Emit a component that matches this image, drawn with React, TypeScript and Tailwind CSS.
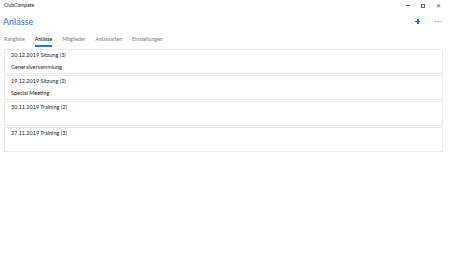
import {MoreHorizontal} from "lucide-react";

const tabs = ["Rangliste", "Anlässe", "Mitglieder", "Anlassarten", "Einstellungen"];

const events = [
    {title: "20.12.2019 Sitzung (3)", note: "Generalversammlung"},
    {title: "19.12.2019 Sitzung (2)", note: "Special Meeting"},
    {title: "30.11.2019 Training (2)", note: ""},
    {title: "27.11.2019 Training (3)", note: ""},
];

const App = () => {
    return (
        <div className="flex flex-col w-[450px] h-[253px] bg-white text-[#222] font-['Lato',sans-serif]">
            {/* title bar */}
            <div className="flex items-center justify-between h-[11px] pl-[4px]">
                <span className="text-[5px] leading-none">ClubCompete</span>
                <div className="flex items-center gap-[11px] pr-[9px] text-[#555]">
                    <div className="w-[4px] h-px bg-[#666]"/>
                    <div className="w-[4px] h-[4px] border border-[#666]"/>
                    <span className="text-[6px] leading-none">✕</span>
                </div>
            </div>

            {/* header */}
            <div className="flex items-center justify-between h-[20px] pl-[3px] pr-[7px]">
                <h1 className="text-[9px] leading-none text-[#1a73e8] mt-[1px]">Anlässe</h1>
                <div className="flex items-center gap-[14px]">
                    <div className="relative w-[5px] h-[5px]">
                        <div className="absolute left-0 top-[2px] w-[5px] h-[1.5px] bg-[#1a73e8]"/>
                        <div className="absolute top-0 left-[2px] w-[1.5px] h-[5px] bg-[#1a73e8]"/>
                    </div>
                    <MoreHorizontal size={9} strokeWidth={2} color="#7fa6d8"/>
                </div>
            </div>

            {/* tabs */}
            <div className="flex gap-[10px] pl-[4px] h-[18px] items-start pt-[4px]">
                {tabs.map((tab) => (
                    <div key={tab} className="flex flex-col items-center gap-[2px]">
                        <span className={`text-[5.2px] leading-[8px] ${tab === "Anlässe" ? "text-black" : "text-[#7a7a7a]"}`}>
                            {tab}
                        </span>
                        {tab === "Anlässe" && <div className="w-full h-[1.5px] bg-[#1a73e8]"/>}
                    </div>
                ))}
            </div>

            {/* list */}
            <div className="flex flex-col gap-px mx-[4px] w-[439px]">
                {events.map((e) => (
                    <div key={e.title} className="flex flex-col h-[25px] border border-[#ebebeb] pl-[6px] pt-[1px]">
                        <span className="text-[5.5px] leading-[9px]">{e.title}</span>
                        <span className="text-[5.5px] leading-[9px] mt-[3px]">{e.note}</span>
                    </div>
                ))}
            </div>
        </div>
    );
};

export default App;
